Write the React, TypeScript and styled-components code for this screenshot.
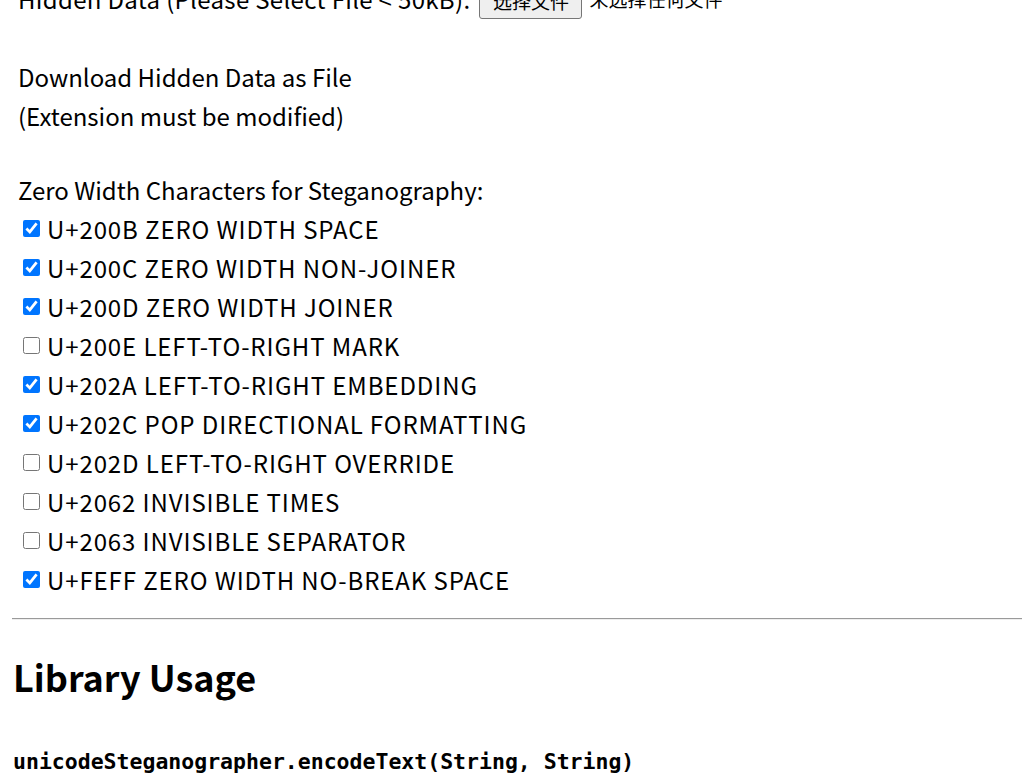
import React from "react";
import styled, { createGlobalStyle } from "styled-components";

const Global = createGlobalStyle`
  html, body { margin: 0; padding: 0; background: #fff; overflow: hidden; }
  body {
    font-family: "Noto Sans CJK JP", "Noto Sans", sans-serif;
    color: #000;
  }
`;

const Page = styled.div`
  padding: 0 0 0 12px;
  margin-top: -21px;
  font-size: 24px;
  line-height: 39px;
`;

const Form = styled.div`
  padding-left: 6px;
`;

const Line = styled.div`
  display: flex;
  align-items: center;
  white-space: nowrap;
  height: 39px;
`;

const FileLabel = styled.span`
  letter-spacing: 0.33px;
`;

const Blank = styled.div<{ $h: number }>`
  height: ${(p) => p.$h}px;
`;

const FileButton = styled.button`
  font-family: "Noto Sans CJK SC", "Noto Sans CJK JP", sans-serif;
  font-size: 19px;
  margin: 0 7px 0 9px;
  width: 103px;
  height: 36px;
  padding: 0;
  border: 1px solid #767676;
  border-radius: 3px;
  background: #efefef;
  color: #000;
  line-height: 34px;
  transform: translateY(2px);
`;

const FileStatus = styled.span`
  font-family: "Noto Sans CJK SC", "Noto Sans CJK JP", sans-serif;
  font-size: 19px;
`;

const CheckRow = styled.label`
  display: flex;
  align-items: center;
  height: 39px;
  white-space: nowrap;
  letter-spacing: 0.9px;
`;

const Check = styled.input`
  width: 17px;
  height: 17px;
  margin: 0 7px 0 5px;
  accent-color: #0075ff;
`;

const Rule = styled.hr`
  margin: 19px 0 0 0;
  border: none;
  border-top: 1px solid #9a9a9a;
  border-bottom: 1px solid #eeeeee;
  height: 0;
`;

const Heading = styled.h2`
  margin: 32px 0 0 1px;
  font-size: 36px;
  font-weight: 700;
  line-height: 48px;
`;

const Code = styled.div`
  margin: 47px 0 0 1px;
  font-family: "DejaVu Sans Mono", "Liberation Mono", monospace;
  font-weight: 700;
  font-size: 21.5px;
  line-height: 30px;
  white-space: nowrap;
`;

const chars: [string, boolean][] = [
  ["U+200B ZERO WIDTH SPACE", true],
  ["U+200C ZERO WIDTH NON-JOINER", true],
  ["U+200D ZERO WIDTH JOINER", true],
  ["U+200E LEFT-TO-RIGHT MARK", false],
  ["U+202A LEFT-TO-RIGHT EMBEDDING", true],
  ["U+202C POP DIRECTIONAL FORMATTING", true],
  ["U+202D LEFT-TO-RIGHT OVERRIDE", false],
  ["U+2062 INVISIBLE TIMES", false],
  ["U+2063 INVISIBLE SEPARATOR", false],
  ["U+FEFF ZERO WIDTH NO-BREAK SPACE", true],
];

export default function App() {
  return (
    <>
      <Global />
      <Page>
        <Form>
          <Line>
            <FileLabel>Hidden Data (Please Select File &lt; 50kB):</FileLabel>
            <FileButton>选择文件</FileButton>
            <FileStatus>未选择任何文件</FileStatus>
          </Line>
          <Blank $h={39} />
          <Line>Download Hidden Data as File</Line>
          <Line>(Extension must be modified)</Line>
          <Blank $h={35} />
          <Line>Zero Width Characters for Steganography:</Line>
          {chars.map(([label, on]) => (
            <CheckRow key={label}>
              <Check type="checkbox" defaultChecked={on} />
              {label}
            </CheckRow>
          ))}
        </Form>
        <Rule />
        <Heading>Library Usage</Heading>
        <Code>unicodeSteganographer.encodeText(String, String)</Code>
      </Page>
    </>
  );
}
